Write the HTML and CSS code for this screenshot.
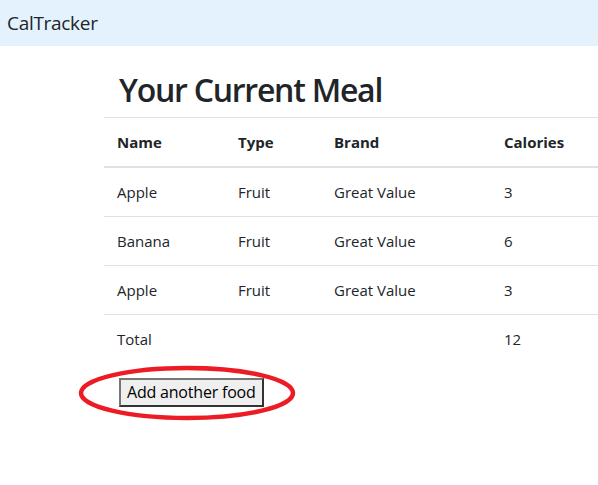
FILE: index.html
```html
<!DOCTYPE html>
<html lang="en">
<head>
<meta charset="utf-8">
<title>CalTracker</title>
<link rel="stylesheet" href="styles.css">
</head>
<body>
<nav class="navbar"><span class="brand">CalTracker</span></nav>
<main class="content">
  <h2 class="title">Your Current Meal</h2>
  <table class="meal">
    <colgroup>
      <col class="c-name"><col class="c-type"><col class="c-brand"><col class="c-cal">
    </colgroup>
    <thead>
      <tr><th>Name</th><th>Type</th><th>Brand</th><th>Calories</th></tr>
    </thead>
    <tbody>
      <tr><td>Apple</td><td>Fruit</td><td>Great Value</td><td>3</td></tr>
      <tr><td>Banana</td><td>Fruit</td><td>Great Value</td><td>6</td></tr>
      <tr><td>Apple</td><td>Fruit</td><td>Great Value</td><td>3</td></tr>
      <tr><td>Total</td><td></td><td></td><td>12</td></tr>
    </tbody>
  </table>
  <div class="actions">
    <button class="add-btn" type="button">Add another food</button>
    <svg class="highlight" width="218" height="56" viewBox="0 0 218 56" aria-hidden="true">
      <ellipse cx="109" cy="28" rx="106" ry="25" fill="none" stroke="#ed1c24" stroke-width="4.5"/>
    </svg>
  </div>
</main>
</body>
</html>
```
FILE: styles.css
```css
html {
  overflow: hidden;
}
body {
  margin: 0;
  padding: 0;
  min-height: 485px;
  font-family: "Open Sans", "Noto Sans", sans-serif;
  font-size: 16px;
  line-height: 1.5;
  color: #212529;
  background: #fff;
}
.navbar {
  background: #e3f2fd;
  height: 46px;
  padding: 0 7px;
  display: flex;
  align-items: center;
}
.brand {
  font-size: 19px;
  line-height: 30px;
  color: #212529;
  letter-spacing: -0.3px;
}
.content {
  padding-left: 104px;
}
.title {
  margin: 25px 0 8px 15px;
  font-size: 32px;
  font-weight: 600;
  line-height: 1.2;
  letter-spacing: -1.25px;
}
.meal {
  width: 494px;
  border-collapse: collapse;
  table-layout: fixed;
}
.c-name { width: 121px; }
.c-type { width: 96px; }
.c-brand { width: 170px; }
.meal th, .meal td {
  padding: 12px 13px;
  text-align: left;
  border-top: 1px solid #dee2e6;
  vertical-align: top;
  white-space: nowrap;
  font-size: 15px;
  line-height: 24px;
}
.meal th {
  font-weight: 700;
  border-bottom: 2px solid #dee2e6;
}
.meal thead + tbody tr:first-child td {
  border-top: 0;
}
.actions {
  position: relative;
  padding: 15px 0 0 15px;
}
.add-btn {
  font-family: "Open Sans", "Noto Sans", sans-serif;
  font-size: 16px;
  line-height: 21px;
  color: #000;
  background: #efefef;
  padding: 2px 6px;
  border: 2px solid;
  border-color: #767676 #333 #333 #767676;
  border-radius: 0;
  letter-spacing: -0.2px;
}
.highlight {
  position: absolute;
  left: -26px;
  top: 2px;
  pointer-events: none;
}
```
